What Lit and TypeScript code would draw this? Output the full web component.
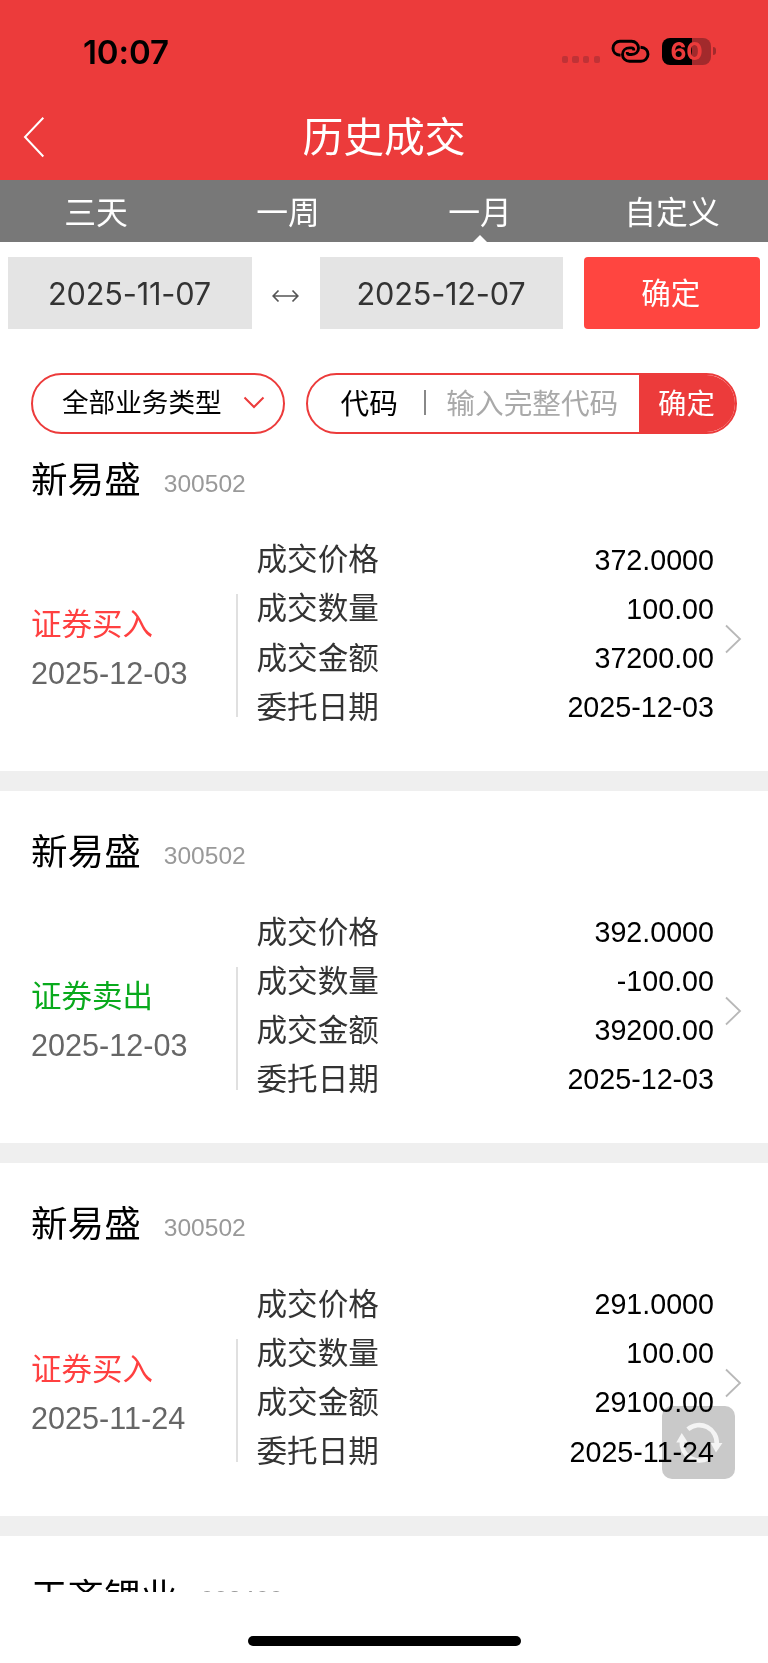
import { LitElement, html, css } from "lit";
import { customElement, property } from "lit/decorators.js";
import { classMap } from "lit/directives/class-map.js";

interface Trade {
  name: string;
  code: string;
  side: "buy" | "sell";
  date: string;
  price: string;
  volume: string;
  amount: string;
  orderDate: string;
}

const TRADES: Trade[] = [
  { name: "新易盛", code: "300502", side: "buy", date: "2025-12-03", price: "372.0000", volume: "100.00", amount: "37200.00", orderDate: "2025-12-03" },
  { name: "新易盛", code: "300502", side: "sell", date: "2025-12-03", price: "392.0000", volume: "-100.00", amount: "39200.00", orderDate: "2025-12-03" },
  { name: "新易盛", code: "300502", side: "buy", date: "2025-11-24", price: "291.0000", volume: "100.00", amount: "29100.00", orderDate: "2025-11-24" },
];

@customElement("status-bar")
class StatusBar extends LitElement {
  static styles = css`
    :host { display: flex; justify-content: space-between; align-items: center; height: 102px; padding: 0 52px 0 83px; box-sizing: border-box; }
    .time { font: 600 33px/40px Inter, sans-serif; color: #000; letter-spacing: -0.1px; padding-top: 1px; }
    .right { display: flex; align-items: center; }
    .dots { display: flex; gap: 4.5px; margin: 17px 11px 0 0; }
    .dot { width: 6.2px; height: 6.2px; border-radius: 2px; background: #c03236; }
    .link { display: block; width: 39px; height: 24px; margin-right: 12px; }
    .battery { display: flex; align-items: center; }
    .body { width: 49px; height: 27px; border-radius: 8px; background: linear-gradient(90deg, #000 0 61%, #a22a2c 61%); font: 700 24.5px/27px Inter, sans-serif; color: #ec3b3b; text-align: center; letter-spacing: -0.2px; }
    .cap { width: 3px; height: 8px; border-radius: 0 4px 4px 0; background: #a22a2c; margin-left: 2px; }
  `;
  render() {
    return html`
      <div class="time">10:07</div>
      <div class="right">
        <div class="dots"><i class="dot"></i><i class="dot"></i><i class="dot"></i><i class="dot"></i></div>
        <svg class="link" viewBox="0 0 39 24" fill="none" stroke="#000" stroke-width="2.9" stroke-linecap="butt">
          <path d="M9.500 16.200C4.400 16 2 12.800 2 9.200C2 5.300 5.200 2.200 9 2.200H20.500C24.500 2.200 27.500 5.200 27.500 9C27.500 13 24.500 15.500 20.500 15.500H18.500C17 15.500 16.200 14.500 16.200 13" />
          <path d="M29.500 8.200C34.600 8.500 37 11.700 37 15.300C37 19.200 33.800 22.200 30 22.200H18.500C14.500 22.200 11.500 19.200 11.500 15.500C11.500 11.500 14.500 8.900 18.500 8.900H20.500C22 8.900 22.800 9.900 22.800 11.400" />
        </svg>
        <div class="battery"><div class="body">60</div><div class="cap"></div></div>
      </div>`;
  }
}

@customElement("trade-card")
class TradeCard extends LitElement {
  @property({ attribute: false }) trade!: Trade;

  static styles = css`
    :host { display: block; height: 372.35px; box-sizing: border-box; border-bottom: 20.5px solid #efefef; padding: 37px 23px 0 31px; background: #fff; }
    .head { display: flex; align-items: baseline; height: 50px; line-height: 50px; }
    .name { font-size: 36.6px; color: #000; margin-right: 23px; }
    .code { font-size: 24.58px; color: #999; transform: translateY(-1px); }
    .main { display: flex; align-items: center; padding-top: 30px; }
    .left { width: 205px; padding-top: 30.5px; }
    .side { font-size: 30.5px; line-height: 49px; }
    .buy { color: #ff4040; }
    .sell { color: #09aa1c; }
    .date { font-size: 30.6px; line-height: 49px; color: #666; }
    .rule { width: 2px; height: 123px; background: #e0e0e0; margin: 44px 18.5px 0 0; }
    .rows { flex: 1; }
    .row { display: flex; justify-content: space-between; align-items: center; height: 49.15px; line-height: 49.15px; }
    .label { font-size: 30.6px; color: #333; padding-bottom: 0.5px; }
    .value { font-size: 28.67px; color: #000; }
    .arrow { width: 17px; height: 30px; margin: 10px 3px 0 11px; }
  `;
  render() {
    const t = this.trade;
    const rows = [["成交价格", t.price], ["成交数量", t.volume], ["成交金额", t.amount], ["委托日期", t.orderDate]];
    return html`
      <div class="head"><span class="name">${t.name}</span><span class="code">${t.code}</span></div>
      <div class="main">
        <div class="left">
          <div class=${classMap({ side: true, buy: t.side === "buy", sell: t.side === "sell" })}>${t.side === "buy" ? "证券买入" : "证券卖出"}</div>
          <div class="date">${t.date}</div>
        </div>
        <div class="rule"></div>
        <div class="rows">
          ${rows.map(([l, v]) => html`<div class="row"><span class="label">${l}</span><span class="value">${v}</span></div>`)}
        </div>
        <svg class="arrow" viewBox="0 0 17 30" fill="none" stroke="#b8b8b8" stroke-width="1.8"><path d="M1 1.500L15 15L1 28.500" /></svg>
      </div>`;
  }
}

@customElement("app-root")
class AppRoot extends LitElement {
  static styles = css`
    :host { display: block; position: relative; width: 768px; height: 1663px; overflow: hidden; background: #fff; font-family: "Liberation Sans", "Noto Sans CJK SC", sans-serif; }
    .top { background: #ec3b3b; height: 180px; }
    .nav { display: grid; grid-template-columns: 60px 1fr 60px; align-items: center; height: 67px; color: #fff; }
    .back { width: 22px; height: 42px; margin-left: 23px; }
    .title { text-align: center; font-size: 40.8px; line-height: 67px; padding-top: 3px; }
    .tabs { display: grid; grid-template-columns: repeat(4, 1fr); height: 61.5px; background: #787878; color: #fff; font-size: 31.8px; line-height: 67px; text-align: center; }
    .tab { position: relative; height: 61.5px; }
    .tab.active::after { content: ""; position: absolute; left: 50%; bottom: 0; margin-left: -7px; border: 7px solid transparent; border-top: 0; border-bottom-color: #fff; }
    .range { display: flex; align-items: center; height: 71.5px; padding: 15.500px 8px 0; font-family: Inter, "Noto Sans CJK SC", sans-serif; }
    .day { box-sizing: border-box; width: 244px; height: 71.5px; padding-right: 1px; background: #e4e4e4; color: #333; font-size: 30.7px; line-height: 73px; text-align: center; letter-spacing: -0.2px; }
    .day.to { width: 243px; }
    .swap { width: 28px; height: 14px; margin: 7px 20px 0; }
    .go { box-sizing: border-box; width: 176.500px; height: 71.5px; padding-right: 2px; margin-left: auto; border-radius: 4px; background: #ff4540; color: #fff; font-size: 29.5px; line-height: 73px; text-align: center; }
    .filters { display: flex; height: 61.5px; gap: 21px; padding: 44px 31px 0; }
    .pill { display: flex; align-items: center; box-sizing: border-box; height: 61.5px; border: 2px solid #ec3b3b; border-radius: 31px; overflow: hidden; }
    .type { width: 254px; padding: 0 18px 0 29px; justify-content: space-between; font-size: 26.62px; }
    .type span { padding-bottom: 5px; }
    .chev { width: 22px; height: 13px; margin-bottom: 2px; }
    .search { flex: 1; padding-left: 32.500px; font-size: 28.67px; }
    .search .key, .search .ph { padding-bottom: 3px; }
    .bar { width: 2px; height: 25px; background: #888; margin: 0 20.500px 2px 26px; }
    .ph { color: #a9a9a9; }
    .ok { box-sizing: border-box; margin-left: auto; width: 96px; padding-right: 1px; height: 100%; background: #ec3b3b; color: #fff; line-height: 59px; text-align: center; font-size: 28.4px; }
    .list { height: 1173.500px; margin-top: -15.500px; overflow: hidden; position: relative; z-index: -1; }
    .clip { isolation: isolate; }
    .next { display: flex; align-items: baseline; padding: 37px 31px 0; line-height: 50px; }
    .next .n { font-size: 36.6px; margin-right: 23px; }
    .next .c { font-size: 24.58px; color: #999; transform: translateY(-2px); }
    .refresh { position: absolute; left: 661.5px; top: 1406px; width: 73.500px; height: 73px; border-radius: 10px; background: #c9c9c9; mix-blend-mode: multiply; }
    .home { position: absolute; left: 247.5px; top: 1636px; width: 273.5px; height: 10px; border-radius: 5px; background: #000; }
  `;
  render() {
    return html`
      <div class="clip">
        <div class="top">
          <status-bar></status-bar>
          <div class="nav">
            <svg class="back" viewBox="0 0 22 42" fill="none" stroke="#fff" stroke-width="2"><path d="M20.300 1.800L2 21L20.300 40.500" /></svg>
            <div class="title">历史成交</div>
          </div>
        </div>
        <div class="tabs">
          <div class="tab">三天</div><div class="tab">一周</div><div class="tab active">一月</div><div class="tab">自定义</div>
        </div>
        <div class="range">
          <div class="day">2025-11-07</div>
          <svg class="swap" viewBox="0 0 28 14" fill="none" stroke="#555" stroke-width="1.7"><path d="M1 7H26M6.500 1.500L1.200 7L6.500 12.500M20.500 1.500L25.800 7L20.500 12.500" /></svg>
          <div class="day to">2025-12-07</div>
          <div class="go">确定</div>
        </div>
        <div class="filters">
          <div class="pill type"><span>全部业务类型</span>
            <svg class="chev" viewBox="0 0 22 13" fill="none" stroke="#ec3b3b" stroke-width="2"><path d="M1.500 1.500L11 11L20.500 1.500" /></svg>
          </div>
          <div class="pill search"><span class="key">代码</span><i class="bar"></i><span class="ph">输入完整代码</span><span class="ok">确定</span></div>
        </div>
        <div class="list">
          ${TRADES.map((t) => html`<trade-card .trade=${t}></trade-card>`)}
          <div class="next"><span class="n">天齐锂业</span><span class="c">002466</span></div>
        </div>
      </div>
      <svg class="refresh" viewBox="0 0 73 73" fill="none" stroke="#f4f4f4" stroke-width="4.600">
        <path d="M25.600 23.300A17.600 17.600 0 0 1 54.500 38" />
        <path d="M47 51.500A17.600 17.600 0 0 1 19.600 35" />
        <path d="M48.500 37H60.200L53.700 46.500ZM14 36.500H25.700L19.500 27Z" fill="#f4f4f4" stroke="none" />
      </svg>
      <div class="home"></div>`;
  }
}
